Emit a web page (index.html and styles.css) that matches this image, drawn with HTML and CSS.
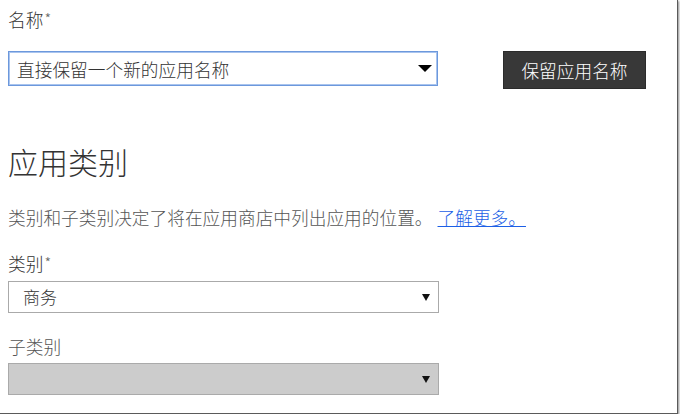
FILE: index.html
```html
<!DOCTYPE html>
<html lang="zh-CN">
<head>
<meta charset="utf-8">
<link rel="stylesheet" href="styles.css">
</head>
<body>
<div class="frame">
  <div class="content">
    <div class="label lbl-name">名称<span class="req">*</span></div>
    <div class="name-row">
      <div class="select select-focus">
        <span class="select-text">直接保留一个新的应用名称</span>
        <span class="arrow-big"></span>
      </div>
      <button class="btn">保留应用名称</button>
    </div>
    <h2 class="heading">应用类别</h2>
    <p class="desc">类别和子类别决定了将在应用商店中列出应用的位置。<a class="link" href="#">了解更多。</a></p>
    <div class="label lbl-cat">类别<span class="req">*</span></div>
    <div class="select select-plain">
      <span class="select-text small-pad">商务</span>
      <span class="arrow-small"></span>
    </div>
    <div class="label lbl-sub">子类别</div>
    <div class="select select-plain select-disabled">
      <span class="select-text"></span>
      <span class="arrow-small"></span>
    </div>
  </div>
</div>
</body>
</html>
```

FILE: styles.css
```css
html, body {
  margin: 0;
  padding: 0;
  background: #ffffff;
}
body {
  font-family: "Noto Sans CJK SC", "Noto Sans", sans-serif;
  font-weight: 300;
  color: #333333;
}
.frame {
  width: 678px;
  height: 414px;
  box-sizing: border-box;
  border-right: 1px solid #5a5a5a;
  border-bottom: 1px solid #5a5a5a;
  box-shadow: 1px 1px 2px rgba(0,0,0,0.45);
  background: #fff;
  overflow: hidden;
}
.content {
  padding: 7px 0 0 8px;
}
.label {
  font-size: 17.7px;
  line-height: 24px;
  color: #333;
}
.req {
  display: inline-block;
  font-size: 15px;
  line-height: 15px;
  vertical-align: top;
  color: #666;
  margin-left: 1px;
  transform: translateY(4px);
}
.name-row {
  display: flex;
  align-items: flex-start;
  margin-top: 20px;
}
.select {
  box-sizing: border-box;
  width: 430px;
  display: flex;
  align-items: center;
  justify-content: space-between;
  font-size: 17.7px;
}
.select-focus {
  height: 35px;
  border: 1px solid #6c98dc;
  box-shadow: 0 0 0 1px #a9c4ee inset;
  padding: 0 4px 0 8px;
}
.select-text {
  line-height: 24px;
  color: #333;
}
.small-pad {
  padding-left: 6px;
}
.arrow-big {
  width: 0;
  height: 0;
  border-left: 7px solid transparent;
  border-right: 7px solid transparent;
  border-top: 7px solid #000;
  margin-right: 1px;
}
.btn {
  margin-left: 65px;
  width: 143px;
  height: 38px;
  background: #383838;
  border: 1px solid #2b2b2b;
  color: #ffffff;
  font-family: "Noto Sans CJK SC", "Noto Sans", sans-serif;
  font-weight: 300;
  font-size: 17.7px;
  padding: 0;
}
.heading {
  margin: 52px 0 0 0;
  font-size: 30px;
  font-weight: 300;
  line-height: 40px;
  color: #333;
}
.desc {
  margin: 24px 0 0 0;
  font-size: 17.7px;
  line-height: 24px;
  color: #555;
  white-space: nowrap;
}
.link {
  color: #1c5fe6;
  text-decoration: underline;
  margin-left: 5px;
}
.lbl-cat {
  margin-top: 22px;
}
.select-plain {
  width: 431px;
  height: 32px;
  border: 1px solid #aaaaaa;
  padding: 0 8px 0 8px;
  margin-top: 6px;
}
.select-plain .select-text {
  font-size: 17px;
}
.arrow-small {
  width: 0;
  height: 0;
  border-left: 4px solid transparent;
  border-right: 4px solid transparent;
  border-top: 7px solid #111;
}
.lbl-sub {
  margin-top: 21px;
  color: #555;
}
.select-disabled {
  background: #cccccc;
  margin-top: 5px;
}
```
